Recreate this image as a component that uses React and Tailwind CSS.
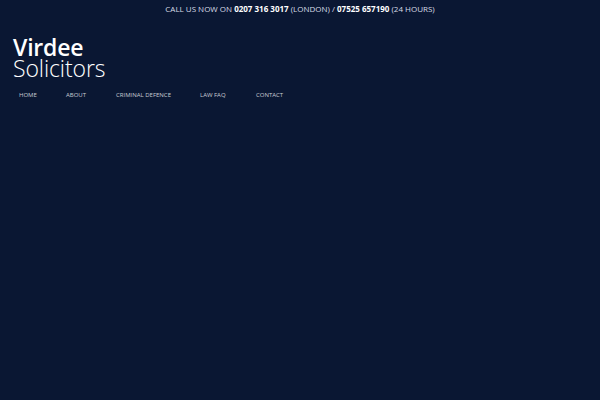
export default function App() {
  return (
    <div className="w-[600px] h-[400px] bg-[#0a1733] text-white overflow-hidden" style={{ fontFamily: "'Open Sans', Lato, sans-serif" }}>
      <div className="h-[17px] flex items-center justify-center text-[8px] text-[#d8dce6]">
        <span>CALL US NOW ON <b className="font-bold text-white">0207 316 3017</b> (LONDON) / <b className="font-bold text-white">07525 657190</b> (24 HOURS)</span>
      </div>
      <div className="pl-[13px] pt-[20px]">
        <div className="text-[23px] font-semibold leading-[21px] tracking-[-0.2px]">Virdee</div>
        <div className="text-[23px] font-light leading-[21px] tracking-[-0.1px]">Solicitors</div>
      </div>
      <nav className="flex pl-[19px] pt-[12px] text-[6px] text-[#c8ccd4] uppercase">
        <span className="w-[47px]">Home</span>
        <span className="w-[50px]">About</span>
        <span className="w-[84px]">Criminal Defence</span>
        <span className="w-[56px]">Law FAQ</span>
        <span>Contact</span>
      </nav>
    </div>
  );
}
